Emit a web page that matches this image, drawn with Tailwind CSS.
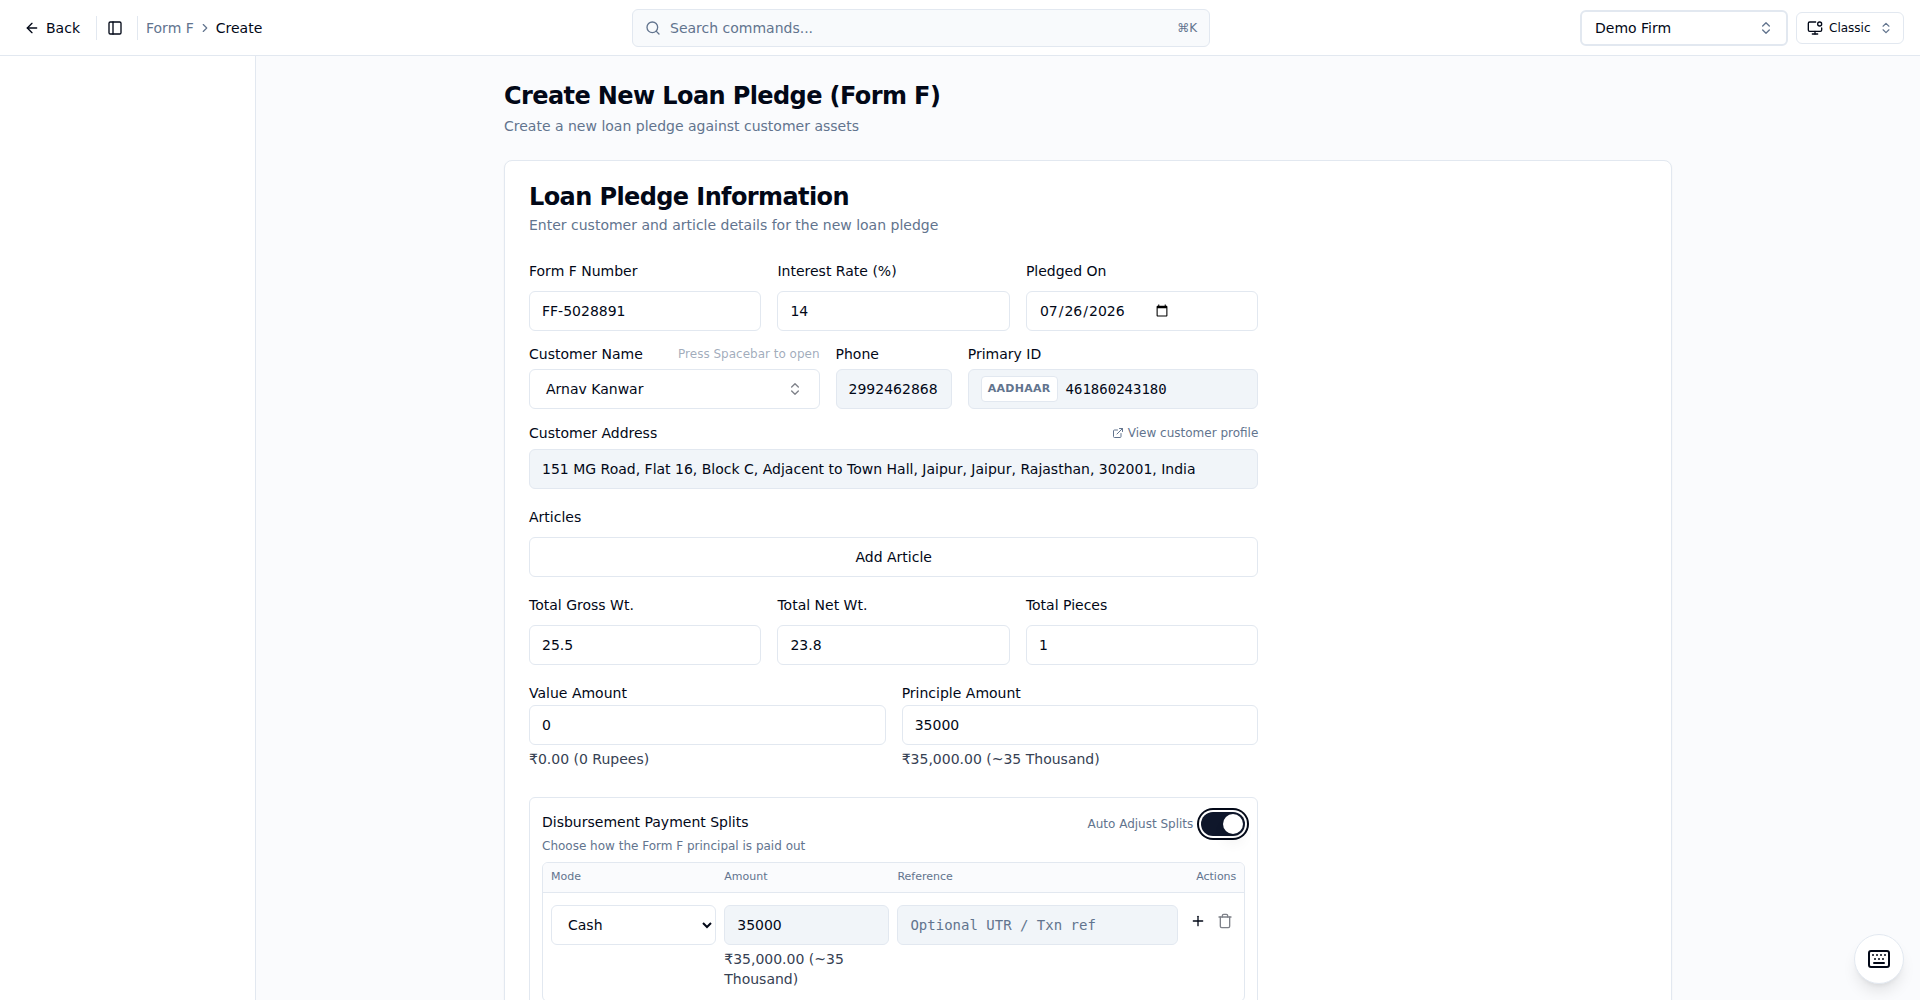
<!DOCTYPE html>
<html lang="en">
<head>
    <meta charset="UTF-8">
    <meta name="viewport" content="width=device-width, initial-scale=1.0">
    <title>Create New Loan Pledge (Form F)</title>
    <script src="https://cdn.jsdelivr.net/npm/@tailwindcss/browser@4"></script>
    <style>
        body { font-family: 'DejaVu Sans', sans-serif; }
    </style>
</head>
<body class="h-screen overflow-hidden bg-[#fafbfd] text-[#020817] flex flex-col">
    <!-- Top bar -->
    <header class="h-14 shrink-0 flex items-center bg-white border-b border-slate-200 pr-4 text-sm">
        <div class="w-[632px] shrink-0 flex items-center pl-6">
            <button class="w-[72px] flex items-center gap-1.5">
                <svg class="size-4" viewBox="0 0 24 24" fill="none" stroke="currentColor" stroke-width="2" stroke-linecap="round" stroke-linejoin="round"><path d="m12 19-7-7 7-7"/><path d="M19 12H5"/></svg>
                Back
            </button>
            <div class="w-px h-6 bg-slate-200"></div>
            <button class="w-10 flex justify-center pr-1">
                <svg class="size-4" viewBox="0 0 24 24" fill="none" stroke="currentColor" stroke-width="2" stroke-linecap="round" stroke-linejoin="round"><rect width="18" height="18" x="3" y="3" rx="2"/><path d="M9 3v18"/></svg>
            </button>
            <div class="w-px h-6 bg-slate-200"></div>
            <nav class="flex items-center gap-1 pl-2">
                <a class="text-slate-500">Form F</a>
                <svg class="size-3.5 text-slate-500" viewBox="0 0 24 24" fill="none" stroke="currentColor" stroke-width="2" stroke-linecap="round" stroke-linejoin="round"><path d="m9 18 6-6-6-6"/></svg>
                <span>Create</span>
            </nav>
        </div>
        <div class="w-[578px] h-[38px] flex items-center gap-[9px] px-3 rounded-md border border-slate-200 bg-slate-50 text-slate-500">
            <svg class="size-4" viewBox="0 0 24 24" fill="none" stroke="currentColor" stroke-width="2" stroke-linecap="round" stroke-linejoin="round"><circle cx="11" cy="11" r="8"/><path d="m21 21-4.3-4.3"/></svg>
            <span class="flex-1">Search commands...</span>
            <kbd class="text-xs font-['DejaVu_Sans']">⌘K</kbd>
        </div>
        <div class="ml-auto flex items-center gap-2">
            <button class="w-[208px] h-9 flex items-center justify-between pl-[13px] pr-3 rounded-md border-2 border-slate-200 bg-white">
                Demo Firm
                <svg class="size-4 text-slate-500" viewBox="0 0 24 24" fill="none" stroke="currentColor" stroke-width="2" stroke-linecap="round" stroke-linejoin="round"><path d="m7 15 5 5 5-5"/><path d="m7 9 5-5 5 5"/></svg>
            </button>
            <button class="w-[108px] h-8 flex items-center gap-1.5 px-2.5 rounded-md border border-slate-200 bg-white text-xs">
                <svg class="size-4" viewBox="0 0 24 24" fill="none" stroke="currentColor" stroke-width="2" stroke-linecap="round" stroke-linejoin="round"><circle cx="19" cy="6" r="3"/><path d="M22 12v3a2 2 0 0 1-2 2H4a2 2 0 0 1-2-2V5a2 2 0 0 1 2-2h9"/><path d="M12 17v4"/><path d="M8 21h8"/></svg>
                Classic
                <svg class="size-3.5 ml-auto text-slate-500" viewBox="0 0 24 24" fill="none" stroke="currentColor" stroke-width="2" stroke-linecap="round" stroke-linejoin="round"><path d="m7 15 5 5 5-5"/><path d="m7 9 5-5 5 5"/></svg>
            </button>
        </div>
    </header>

    <div class="flex-1 min-h-0 flex">
        <aside class="w-64 shrink-0 bg-white border-r border-slate-200"></aside>

        <main class="flex-1 overflow-hidden pt-6">
            <div class="w-[1168px] mx-auto">
                <h1 class="text-2xl font-bold tracking-tight">Create New Loan Pledge (Form F)</h1>
                <p class="mt-1 text-sm text-slate-500">Create a new loan pledge against customer assets</p>

                <section class="mt-6 h-[1100px] p-6 bg-white rounded-lg border border-slate-200 shadow-xs">
                    <h2 class="text-2xl leading-none font-bold tracking-tight">Loan Pledge Information</h2>
                    <p class="mt-1.5 text-sm text-slate-500">Enter customer and article details for the new loan pledge</p>

                    <div class="mt-6 grid grid-cols-3 gap-12">
                        <form class="col-span-2">
                            <div class="grid grid-cols-3 gap-4">
                                <div>
                                    <label class="block mb-2 leading-6"><span class="text-sm leading-none">Form F Number</span></label>
                                    <input value="FF-5028891" class="w-full h-10 px-3 text-sm rounded-md border border-slate-200 bg-white">
                                </div>
                                <div>
                                    <label class="block mb-2 leading-6"><span class="text-sm leading-none">Interest Rate (%)</span></label>
                                    <input value="14" class="w-full h-10 px-3 text-sm rounded-md border border-slate-200 bg-white">
                                </div>
                                <div>
                                    <label class="block mb-2 leading-6"><span class="text-sm leading-none">Pledged On</span></label>
                                    <input type="date" value="2026-07-26" class="flex w-full h-10 px-3 py-2 text-sm rounded-md border border-slate-200 bg-white">
                                </div>
                            </div>

                            <!-- Customer -->
                            <div class="mt-4 grid grid-cols-[5fr_2fr_5fr] gap-4">
                                <div>
                                    <div class="h-3.5 mb-2 flex items-center justify-between">
                                        <label class="text-sm leading-none">Customer Name</label>
                                        <span class="text-xs text-slate-500/60">Press Spacebar to open</span>
                                    </div>
                                    <button type="button" class="w-full h-10 px-4 flex items-center justify-between text-sm rounded-md border border-slate-200 bg-white">
                                        Arnav Kanwar
                                        <svg class="size-4 opacity-50" viewBox="0 0 24 24" fill="none" stroke="currentColor" stroke-width="2" stroke-linecap="round" stroke-linejoin="round"><path d="m7 15 5 5 5-5"/><path d="m7 9 5-5 5 5"/></svg>
                                    </button>
                                </div>
                                <div>
                                    <div class="h-3.5 mb-2 flex items-center">
                                        <label class="text-sm leading-none">Phone</label>
                                    </div>
                                    <div class="h-10 px-3 flex items-center text-sm rounded-md border border-slate-200 bg-slate-100">2992462868</div>
                                </div>
                                <div>
                                    <div class="h-3.5 mb-2 flex items-center">
                                        <label class="text-sm leading-none">Primary ID</label>
                                    </div>
                                    <div class="h-10 px-3 flex items-center gap-2 text-sm rounded-md border border-slate-200 bg-slate-100">
                                        <span class="px-1.5 py-1 text-[11px] leading-4 font-bold tracking-wide text-slate-500 rounded-sm border border-slate-200 bg-white">AADHAAR</span>
                                        <span class="font-['DejaVu_Sans_Mono']">461860243180</span>
                                    </div>
                                </div>
                            </div>

                            <div class="mt-4">
                                <div class="h-4 mb-2 flex items-center justify-between">
                                    <label class="text-sm leading-none">Customer Address</label>
                                    <a class="flex items-center gap-1 text-xs text-slate-500">
                                        <svg class="size-3" viewBox="0 0 24 24" fill="none" stroke="currentColor" stroke-width="2" stroke-linecap="round" stroke-linejoin="round"><path d="M15 3h6v6"/><path d="M10 14 21 3"/><path d="M18 13v6a2 2 0 0 1-2 2H5a2 2 0 0 1-2-2V8a2 2 0 0 1 2-2h6"/></svg>
                                        View customer profile
                                    </a>
                                </div>
                                <div class="h-10 px-3 flex items-center text-sm rounded-md border border-slate-200 bg-slate-100">151 MG Road, Flat 16, Block C, Adjacent to Town Hall, Jaipur, Jaipur, Rajasthan, 302001, India</div>
                            </div>

                            <div class="mt-4">
                                <label class="block mb-2 leading-6"><span class="text-sm leading-none">Articles</span></label>
                                <button type="button" class="w-full h-10 text-sm rounded-md border border-slate-200 bg-white">Add Article</button>
                            </div>

                            <!-- Totals -->
                            <div class="mt-4 grid grid-cols-3 gap-4">
                                <div>
                                    <label class="block mb-2 leading-6"><span class="text-sm leading-none">Total Gross Wt.</span></label>
                                    <input value="25.5" class="w-full h-10 px-3 text-sm rounded-md border border-slate-200 bg-white">
                                </div>
                                <div>
                                    <label class="block mb-2 leading-6"><span class="text-sm leading-none">Total Net Wt.</span></label>
                                    <input value="23.8" class="w-full h-10 px-3 text-sm rounded-md border border-slate-200 bg-white">
                                </div>
                                <div>
                                    <label class="block mb-2 leading-6"><span class="text-sm leading-none">Total Pieces</span></label>
                                    <input value="1" class="w-full h-10 px-3 text-sm rounded-md border border-slate-200 bg-white">
                                </div>
                            </div>

                            <div class="mt-4 grid grid-cols-2 gap-4">
                                <div>
                                    <label class="block leading-6"><span class="text-sm leading-none">Value Amount</span></label>
                                    <input value="0" class="block w-full h-10 px-3 text-sm rounded-md border border-slate-200 bg-white">
                                    <p class="mt-1 text-sm text-gray-700">₹0.00 (0 Rupees)</p>
                                </div>
                                <div>
                                    <label class="block leading-6"><span class="text-sm leading-none">Principle Amount</span></label>
                                    <input value="35000" class="block w-full h-10 px-3 text-sm rounded-md border border-slate-200 bg-white">
                                    <p class="mt-1 text-sm text-gray-700">₹35,000.00 (~35 Thousand)</p>
                                </div>
                            </div>

                            <!-- Payment splits -->
                            <div class="mt-7 p-3 rounded-md border border-slate-200">
                                <div class="flex items-start justify-between">
                                    <div>
                                        <h3 class="leading-6"><span class="text-sm leading-none">Disbursement Payment Splits</span></h3>
                                        <p class="mt-1 text-xs text-slate-500">Choose how the Form F principal is paid out</p>
                                    </div>
                                    <div class="mt-0.5 flex items-center gap-2">
                                        <span class="text-xs text-slate-500">Auto Adjust Splits</span>
                                        <button type="button" role="switch" aria-checked="true" class="w-11 h-6 p-0.5 flex justify-end rounded-full bg-slate-900 ring-2 ring-[#020817] ring-offset-2 ring-offset-white">
                                            <span class="size-5 rounded-full bg-white shadow-lg"></span>
                                        </button>
                                    </div>
                                </div>

                                <div class="mt-2 rounded-md border border-slate-200 overflow-hidden">
                                    <div class="h-[30px] px-2 grid grid-cols-[1fr_1fr_1.7fr_50px] gap-2 items-center text-[11px] text-slate-500 bg-[#fafbfd] border-b border-slate-200">
                                        <span>Mode</span>
                                        <span>Amount</span>
                                        <span>Reference</span>
                                        <span class="flex justify-end">Actions</span>
                                    </div>
                                    <div class="px-2 py-3 grid grid-cols-[1fr_1fr_1.7fr_50px] gap-2 text-sm">
                                        <select class="w-full h-10 px-3 rounded-md border border-slate-200 bg-white">
                                            <option>Cash</option>
                                        </select>
                                        <div>
                                            <input value="35000" class="block w-full h-10 px-3 rounded-md border border-slate-200 bg-slate-100">
                                            <p class="mt-1 text-gray-700">₹35,000.00 (~35 Thousand)</p>
                                        </div>
                                        <input placeholder="Optional UTR / Txn ref" class="w-full h-10 px-3 font-['DejaVu_Sans_Mono'] rounded-md border border-slate-200 bg-slate-100 placeholder:text-slate-500">
                                        <div class="h-8 flex items-center justify-end gap-[11px] pr-[3px]">
                                            <svg class="size-4" viewBox="0 0 24 24" fill="none" stroke="currentColor" stroke-width="2" stroke-linecap="round" stroke-linejoin="round"><path d="M5 12h14"/><path d="M12 5v14"/></svg>
                                            <svg class="size-4 opacity-50" viewBox="0 0 24 24" fill="none" stroke="currentColor" stroke-width="2" stroke-linecap="round" stroke-linejoin="round"><path d="M3 6h18"/><path d="M19 6v14c0 1-1 2-2 2H7c-1 0-2-1-2-2V6"/><path d="M8 6V4c0-1 1-2 2-2h4c1 0 2 1 2 2v2"/></svg>
                                        </div>
                                    </div>
                                </div>
                            </div>
                        </form>
                    </div>
                </section>
            </div>
        </main>
    </div>

    <!-- Keyboard shortcuts -->
    <button class="fixed right-4 bottom-4 size-[50px] flex items-center justify-center rounded-full border border-slate-200 bg-white shadow-lg">
        <svg class="size-6" viewBox="0 0 24 24" fill="none" stroke="currentColor" stroke-width="2" stroke-linecap="round" stroke-linejoin="round"><path d="M10 8h.01"/><path d="M12 12h.01"/><path d="M14 8h.01"/><path d="M16 12h.01"/><path d="M18 8h.01"/><path d="M6 8h.01"/><path d="M7 16h10"/><path d="M8 12h.01"/><rect width="20" height="16" x="2" y="4" rx="2"/></svg>
    </button>
</body>
</html>
